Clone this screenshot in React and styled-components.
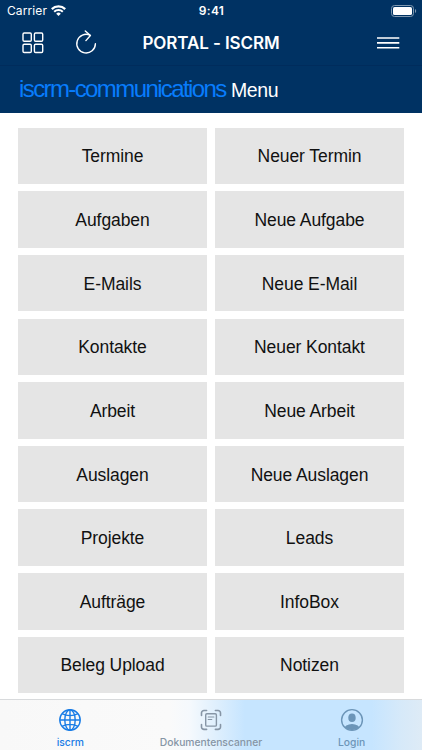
import React, { useState } from "react";
import styled, { createGlobalStyle } from "styled-components";

const entries = [
  "Termine",
  "Neuer Termin",
  "Aufgaben",
  "Neue Aufgabe",
  "E-Mails",
  "Neue E-Mail",
  "Kontakte",
  "Neuer Kontakt",
  "Arbeit",
  "Neue Arbeit",
  "Auslagen",
  "Neue Auslagen",
  "Projekte",
  "Leads",
  "Aufträge",
  "InfoBox",
  "Beleg Upload",
  "Notizen",
];

function WifiIcon() {
  return (
    <svg width="15" height="11" viewBox="0 0 15 11" fill="none" stroke="#fff">
      <path d="M0.8 4.1a9.5 9.5 0 0 1 13.4 0" strokeWidth="2.3" />
      <path d="M3.2 6.7a6.1 6.1 0 0 1 8.6 0" strokeWidth="2" />
      <path d="M7.5 11 5.2 8.7a3.3 3.3 0 0 1 4.6 0z" fill="#fff" stroke="none" />
    </svg>
  );
}

function BatteryIcon() {
  return (
    <svg width="26" height="12" viewBox="0 0 26 12" fill="none">
      <rect x="0.5" y="0.5" width="22" height="11" rx="3" stroke="#7f98b0" />
      <rect x="2" y="2" width="19" height="8" rx="1.6" fill="#fff" />
      <path d="M24 4v4c1.6-.6 1.6-3.4 0-4z" fill="#7f98b0" />
    </svg>
  );
}

function GridIcon() {
  return (
    <svg width="22" height="22" viewBox="0 0 22 22" fill="none" stroke="#fff" strokeWidth="1.4">
      <rect x="1" y="1" width="8.3" height="8.3" rx="1.2" />
      <rect x="12.4" y="1" width="8.3" height="8.3" rx="1.2" />
      <rect x="1" y="12.2" width="8.3" height="8.3" rx="1.2" />
      <rect x="12.4" y="12.2" width="8.3" height="8.3" rx="1.2" />
    </svg>
  );
}

function ReloadIcon() {
  return (
    <svg width="22" height="26" viewBox="0 0 22 26" fill="none" stroke="#fff" strokeWidth="1.4" strokeLinecap="round" strokeLinejoin="round">
      <path d="M15.2 5.3A9.3 9.3 0 1 0 20.4 13.7" />
      <path d="M10.3 0.9 15.4 5.5 10.9 10.6" />
    </svg>
  );
}

function MenuIcon() {
  return (
    <svg width="24" height="14" viewBox="0 0 24 14" stroke="#fff" strokeWidth="1.6">
      <path d="M1 2h22.3M1 6.9h22.3M1 11.8h22.3" />
    </svg>
  );
}

function GlobeIcon() {
  return (
    <svg width="24" height="24" viewBox="0 0 24 24" fill="none" stroke="currentColor" strokeWidth="1.4">
      <circle cx="12" cy="12" r="10.2" />
      <ellipse cx="12" cy="12" rx="5.2" ry="10.2" />
      <path d="M12 1.8v20.4M1.8 12h20.4M4.1 5.7c4.5 2.6 11.3 2.6 15.8 0M4.1 18.3c4.5-2.6 11.3-2.6 15.8 0" />
    </svg>
  );
}

function ScannerIcon() {
  return (
    <svg width="24" height="24" viewBox="0 0 24 24" fill="none" stroke="currentColor" strokeWidth="1.6" strokeLinecap="round">
      <path d="M2.5 7.4V5a2.5 2.5 0 0 1 2.5-2.5h2.6M16.4 2.5H19A2.5 2.5 0 0 1 21.5 5v2.4M21.5 16.5v2.4a2.5 2.5 0 0 1-2.5 2.5h-2.6M7.6 21.4H5a2.5 2.5 0 0 1-2.5-2.5v-2.4" />
      <rect x="6.7" y="5.8" width="10.7" height="12.3" rx="1.2" strokeWidth="1.4" />
      <path d="M9.2 9h5.7M9.2 11.5h3.6" strokeWidth="1.1" />
    </svg>
  );
}

function PersonIcon() {
  return (
    <svg width="24" height="24" viewBox="0 0 24 24">
      <clipPath id="badge">
        <circle cx="12" cy="12" r="10.2" />
      </clipPath>
      <g clipPath="url(#badge)" fill="currentColor">
        <ellipse cx="12" cy="9.8" rx="3.7" ry="4.3" />
        <ellipse cx="12" cy="21.3" rx="8" ry="5.3" />
      </g>
      <circle cx="12" cy="12" r="10.4" fill="none" stroke="currentColor" strokeWidth="1.4" />
    </svg>
  );
}

const tabs = [
  { id: "iscrm", label: "iscrm", icon: GlobeIcon, color: "#8e949b" },
  { id: "scanner", label: "Dokumentenscanner", icon: ScannerIcon, color: "#8695a5" },
  { id: "login", label: "Login", icon: PersonIcon, color: "#6c95b8" },
];

function App() {
  const [active, setActive] = useState("iscrm");

  return (
    <Screen>
      <GlobalStyle />
      <StatusBar>
        <Carrier>
          <span>Carrier</span>
          <WifiIcon />
        </Carrier>
        <Time>9:41</Time>
        <Battery>
          <BatteryIcon />
        </Battery>
      </StatusBar>
      <NavBar>
        <NavActions>
          <IconButton aria-label="Apps">
            <GridIcon />
          </IconButton>
          <IconButton aria-label="Reload">
            <ReloadIcon />
          </IconButton>
        </NavActions>
        <Title>PORTAL - ISCRM</Title>
        <NavActions $end>
          <IconButton aria-label="Menu">
            <MenuIcon />
          </IconButton>
        </NavActions>
      </NavBar>
      <PageHeader>
        <Brand>iscrm-communications</Brand>
        <PageName>Menu</PageName>
      </PageHeader>
      <Menu>
        {entries.map((entry) => (
          <MenuButton key={entry}>{entry}</MenuButton>
        ))}
      </Menu>
      <TabBar>
        {tabs.map(({ id, label, icon: Icon, color }) => (
          <Tab
            key={id}
            $color={active === id ? "#187ce6" : color}
            onClick={() => setActive(id)}
          >
            <Icon />
            <TabLabel>{label}</TabLabel>
          </Tab>
        ))}
      </TabBar>
    </Screen>
  );
}

export default App;

const GlobalStyle = createGlobalStyle`
  * {
    box-sizing: border-box;
  }
  body {
    margin: 0;
    background-color: #fff;
  }
  button {
    border: none;
    padding: 0;
    background: none;
    font: inherit;
    cursor: pointer;
  }
  svg {
    display: block;
    flex-shrink: 0;
  }
`;
const Screen = styled.div`
  display: flex;
  flex-direction: column;
  height: 100vh;
  overflow: hidden;
  font-family: Inter, "Liberation Sans", sans-serif;
`;
const StatusBar = styled.div`
  display: grid;
  grid-template-columns: 1fr auto 1fr;
  align-items: center;
  height: 21px;
  padding: 0 6px 0 7px;
  background-color: #003263;
  color: #fff;
  font-size: 12px;
`;
const Carrier = styled.div`
  display: flex;
  align-items: center;
  gap: 4px;
  letter-spacing: 0.1px;
`;
const Time = styled.div`
  font-weight: 600;
  letter-spacing: 0.3px;
`;
const Battery = styled.div`
  display: flex;
  justify-content: flex-end;
  margin-right: -1px;
`;
const NavBar = styled.div`
  display: grid;
  grid-template-columns: 1fr auto 1fr;
  align-items: center;
  height: 45px;
  padding: 0 22px;
  background-color: #003263;
  border-bottom: 1px solid #002c5c;
`;
const NavActions = styled.div`
  display: flex;
  align-items: center;
  gap: 31px;
  justify-content: ${({ $end }) => ($end ? "flex-end" : "flex-start")};
`;
const IconButton = styled.button`
  display: grid;
  place-items: center;
`;
const Title = styled.h1`
  margin: 0;
  color: #fff;
  font-size: 17px;
  font-weight: 600;
  line-height: 20px;
  letter-spacing: -0.1px;
`;
const PageHeader = styled.div`
  display: flex;
  align-items: baseline;
  height: 47px;
  padding: 9px 19px 0;
  background-color: #003263;
  line-height: 28px;
  white-space: nowrap;
`;
const Brand = styled.span`
  width: 212px;
  color: #087cfc;
  font-family: "Liberation Sans", Arial, sans-serif;
  font-size: 24px;
  letter-spacing: -1.6px;
`;
const PageName = styled.span`
  color: #fff;
  font-family: "Liberation Sans", Arial, sans-serif;
  font-size: 19.5px;
  letter-spacing: -0.4px;
`;
const Menu = styled.div`
  display: grid;
  grid-template-columns: 1fr 1fr;
  grid-auto-rows: 56.5px;
  gap: 7.15px;
  flex: 1;
  min-height: 0;
  padding: 14.6px 17.6px 0;
`;
const MenuButton = styled.button`
  padding-top: 2px;
  background-color: #e5e5e5;
  color: #111;
  font-family: "Liberation Sans", Arial, sans-serif;
  font-size: 17.5px;
  letter-spacing: -0.08px;
`;
const TabBar = styled.div`
  display: grid;
  grid-template-columns: repeat(3, 1fr);
  height: 51px;
  border-top: 1px solid #d8dadc;
  background: linear-gradient(
    90deg,
    #f8f8f8 0%,
    #fafafa 40%,
    #f5f9fd 45%,
    #dceefd 52%,
    #c6e5ff 58%,
    #c6e5ff 88%,
    #d6e9f9 95%,
    #deebf6 100%
  );
`;
const Tab = styled.button`
  display: flex;
  flex-direction: column;
  align-items: center;
  padding-top: 8px;
  color: ${({ $color }) => $color};
`;
const TabLabel = styled.span`
  margin-top: 3px;
  font-size: 10.3px;
  font-weight: 500;
  line-height: 14px;
`;
